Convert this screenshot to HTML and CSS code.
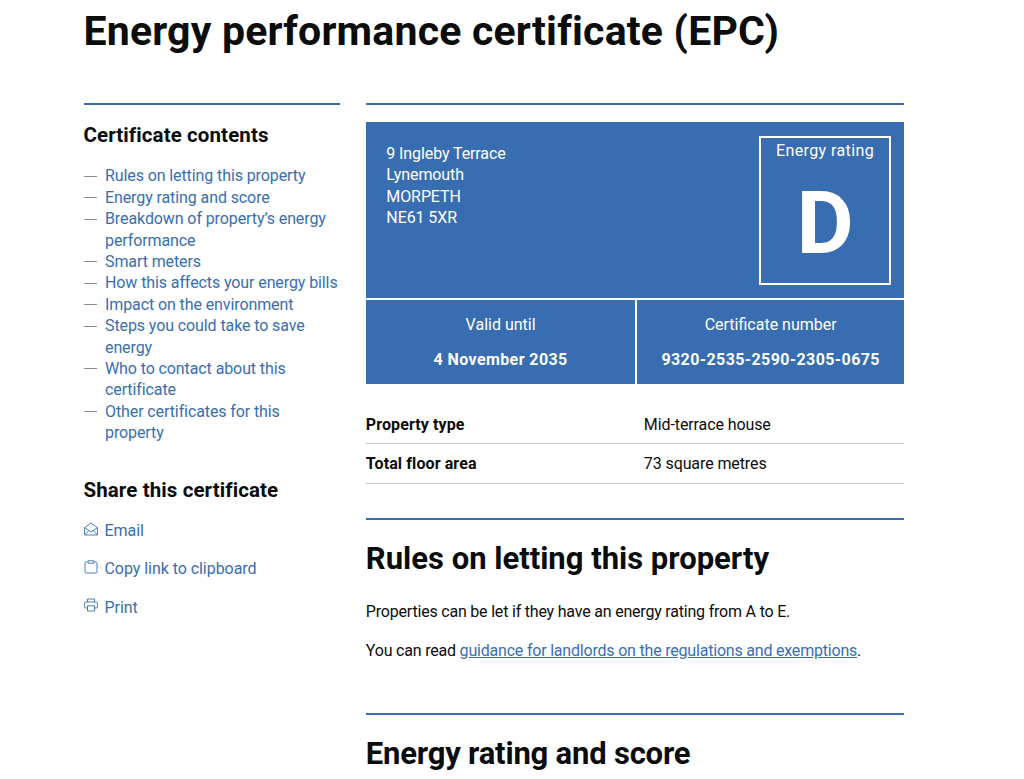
FILE: index.html
```html
<!DOCTYPE html>
<html lang="en">
<head>
<meta charset="utf-8">
<title>Energy performance certificate (EPC)</title>
<link rel="stylesheet" href="styles.css">
</head>
<body>
<div class="page">
  <h1 class="title">Energy performance certificate (EPC)</h1>
  <div class="columns">
    <aside class="side">
      <h2 class="side-heading">Certificate contents</h2>
      <ul class="contents">
        <li><a href="#">Rules on letting this property</a></li>
        <li><a href="#">Energy rating and score</a></li>
        <li><a href="#">Breakdown of property’s energy performance</a></li>
        <li><a href="#">Smart meters</a></li>
        <li><a href="#">How this affects your energy bills</a></li>
        <li><a href="#">Impact on the environment</a></li>
        <li><a href="#">Steps you could take to save energy</a></li>
        <li><a href="#">Who to contact about this certificate</a></li>
        <li><a href="#">Other certificates for this property</a></li>
      </ul>
      <h2 class="side-heading share-heading">Share this certificate</h2>
      <ul class="share">
        <li><svg class="icon" viewBox="0 0 14 14"><path d="M.6 5.600 7 1l6.400 4.600v7.400H.6zM.6 5.600 7 10l6.400-4.400M.8 12.800 5 8.400M13.200 12.800 9 8.400"/></svg><a href="#">Email</a></li>
        <li><svg class="icon" viewBox="0 0 14 14"><path d="M3.500 2H2.200Q1 2 1 3.200v8.600Q1 13 2.200 13h9.600q1.200 0 1.200-1.200V3.200Q13 2 11.800 2H10.500M4 .8h6v2.400H4z"/></svg><a href="#">Copy link to clipboard</a></li>
        <li><svg class="icon" viewBox="0 0 14 14"><path d="M3.500 4V1h7v3M3.500 10H1.800Q.6 10 .6 8.800V5.400Q.6 4 2 4h10q1.400 0 1.400 1.400v3.400q0 1.200-1.200 1.200H10.500M3.500 7.800h7V13h-7z"/></svg><a href="#">Print</a></li>
      </ul>
    </aside>
    <main class="main">
      <section class="summary">
        <div class="summary-top">
          <p class="address">9 Ingleby Terrace<br>Lynemouth<br>MORPETH<br>NE61 5XR</p>
          <div class="rating">
            <span class="rating-label">Energy rating</span>
            <span class="rating-letter">D</span>
          </div>
        </div>
        <div class="summary-bottom">
          <div class="fact fact-first"><span>Valid until</span><strong>4 November 2035</strong></div>
          <div class="fact"><span>Certificate number</span><strong>9320-2535-2590-2305-0675</strong></div>
        </div>
      </section>
      <dl class="details">
        <div class="row"><dt>Property type</dt><dd>Mid-terrace house</dd></div>
        <div class="row"><dt>Total floor area</dt><dd>73 square metres</dd></div>
      </dl>
      <section class="block">
        <h2 class="block-heading">Rules on letting this property</h2>
        <p class="text">Properties can be let if they have an energy rating from A to E.</p>
        <p class="text">You can read <a href="#">guidance for landlords on the regulations and exemptions</a>.</p>
      </section>
      <section class="block">
        <h2 class="block-heading">Energy rating and score</h2>
      </section>
    </main>
  </div>
</div>
</body>
</html>
```
FILE: styles.css
```css
* { box-sizing: border-box; }
html, body { margin: 0; height: 779px; overflow: hidden; background: #fff; }
body { font-family: Roboto, sans-serif; font-size: 16px; line-height: 21.350px; color: #0b0c0c; }
a { color: #386eb1; text-decoration: none; }
.page { padding: 0 120px 0 83.500px; }
.title { margin: 0; height: 103px; padding-top: 8px; font-size: 41px; line-height: 47px; font-weight: 700; letter-spacing: 0.2px; }
.columns { display: flex; gap: 26px; }
.side { width: 256.500px; border-top: 2.500px solid #386eb1; padding-top: 17px; }
.side-heading { margin: 0; font-size: 20.500px; line-height: 27px; font-weight: 700; letter-spacing: 0.1px; }
.contents { list-style: none; margin: 16.300px 0 0; padding: 0; line-height: 21.400px; letter-spacing: -0.1px; }
.contents li { position: relative; padding-left: 21.500px; }
.contents li::before { content: ""; position: absolute; left: 0; top: 10.500px; width: 13px; height: 1px; background: #8a8c8c; }
.share-heading { margin-top: 33.500px; }
.share { list-style: none; margin: 16px 0 0; padding: 0; display: flex; flex-direction: column; gap: 17px; letter-spacing: -0.05px; }
.share li { display: flex; align-items: flex-start; gap: 7px; }
.icon { width: 14px; height: 14px; margin-top: 1.500px; fill: none; stroke: #386eb1; stroke-width: 0.9; }
.main { width: 538.500px; border-top: 2.500px solid #386eb1; padding-top: 17px; }
.summary { background: #386eb1; color: #fff; }
.summary-top { height: 178px; display: flex; justify-content: space-between; padding: 14px 13px 14px 20.500px; border-bottom: 2px solid #fff; }
.address { margin: 7px 0 0; letter-spacing: -0.1px; }
.rating { width: 132px; height: 149px; border: 2px solid #fff; display: flex; flex-direction: column; align-items: center; }
.rating-label { margin-top: 2px; letter-spacing: 0.4px; }
.rating-letter { font-size: 88px; line-height: 90px; font-weight: 700; margin-top: 17px; }
.summary-bottom { display: flex; height: 84px; }
.fact { flex: 1; display: flex; flex-direction: column; align-items: center; padding-top: 14px; gap: 14px; }
.fact strong { letter-spacing: 0.4px; }
.fact-first { flex: 0 0 269.500px; }
.fact + .fact { border-left: 2px solid #fff; }
.details { margin: 20.500px 0 0; }
.row { display: flex; height: 39.500px; padding-top: 9px; border-bottom: 1px solid #c8c8c8; }
.row dt { width: 278px; font-weight: 700; letter-spacing: 0.1px; }
.row dd { margin: 0; letter-spacing: -0.1px; }
.block { margin-top: 34px; border-top: 2.500px solid #386eb1; padding-top: 21.500px; height: 161px; }
.block-heading { margin: 0 0 23.500px; font-size: 31px; line-height: 36px; font-weight: 700; }
.block + .block { height: auto; }
.block + .block .block-heading { margin-bottom: 0; letter-spacing: -0.2px; }
.text { margin: 0 0 18px; letter-spacing: -0.2px; }
.text a { text-decoration: underline; }
```
